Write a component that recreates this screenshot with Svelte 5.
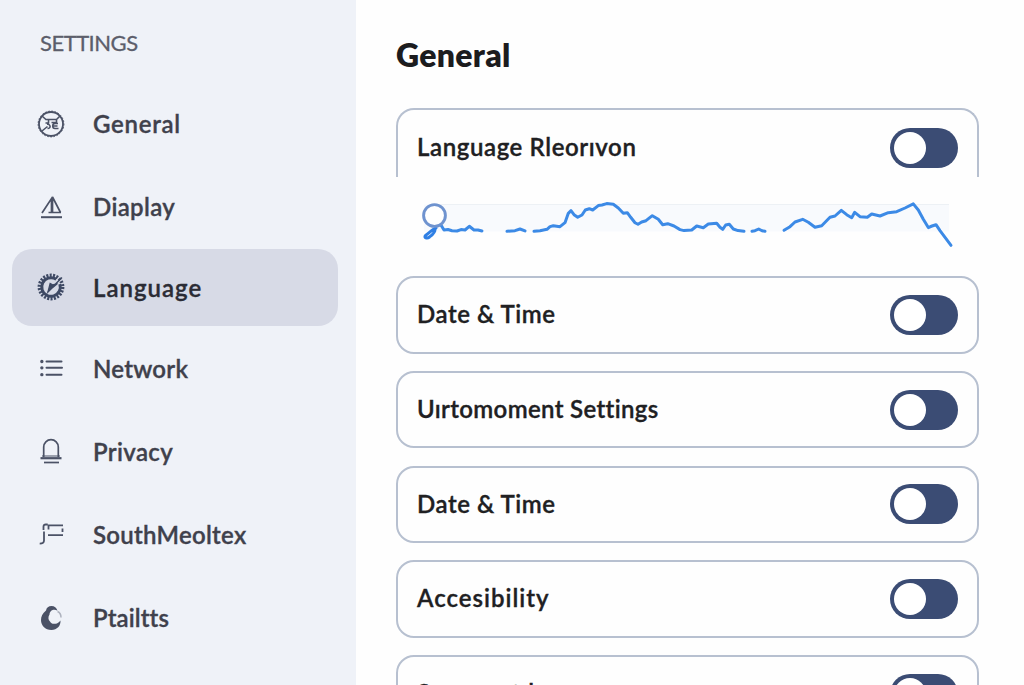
<script>
  const items = [
    { label: 'General', icon: 'badge', spacing: 0.72 },
    { label: 'Diaplay', icon: 'sail', spacing: 0.35 },
    { label: 'Language', icon: 'gear', spacing: 1, active: true },
    { label: 'Network', icon: 'list', spacing: 0.25 },
    { label: 'Privacy', icon: 'bell', spacing: 0.35 },
    { label: 'SouthMeoltex', icon: 'flag', spacing: 0.28 },
    { label: 'Ptailtts', icon: 'moon', spacing: 0.1 }
  ];
  const rows = [
    { label: 'Date & Time', spacing: 0.55 },
    { label: 'Uırtomoment Settings', spacing: 0.35 },
    { label: 'Date & Time', spacing: 0.55 },
    { label: 'Accesibility', spacing: 1 },
    { label: 'Sommentd', spacing: 0.3 }
  ];
  const segments = [
    '440,224 442,226.7 444,230 448,229.5 452,230.7 457,231 461,229.6 465,230 469.3,226.3 474,230 478,230 482,231',
    '507,231.3 515,230.7 520,229 525,230.9',
    '534,231.3 540,230.7 547,229.3 550,226.6 553.3,225.7 560,226.7 565,222.7 568.3,213.3 571,210.7 574,214.7 577.7,217.3 582,215 585.3,210 589.3,208.7 592.7,210 598.3,205.6 602,205 606.7,203.6 613.3,204.3 618.3,208 623.3,213.3 627.3,212.7 630.7,217.3 635,222.7 638,224.3 641.7,222 646,220.7 652.3,215.7 658.3,219.3 662.7,224.7 667.7,223.7 674,226 680,229.6 684,230.6 691.7,230 696.7,226 703.3,227.7 708.3,224 716.7,223.3 720,227.3 722.7,229.3 725.7,225 729.3,224.3 733.3,229 738,230.6 744,231.3',
    '752,231.2 755,230.7 758.7,229 762,230.8 765,231.3',
    '784,230.3 790,226.7 795,222 802.7,219.3 808.3,222.3 815,227.3 821.7,225.7 830,217.3 835,216 841.3,210.3 846.7,214.7 851.7,217.7 854.7,212.3 860,216.7 867.3,217.3 871.7,214 880,216 888.3,212.7 896.7,211.7 905,208 913.3,203.9 918.3,210 923.3,219.3 928.3,227.6 932,226 936,224.7 940,230.7 951,245.4'
  ];
</script>

{#snippet toggle(name)}
  <button class="toggle" role="switch" aria-checked="false" aria-label={name}><span class="knob"></span></button>
{/snippet}

<div class="app">
  <nav class="sidebar">
    <h2>SETTINGS</h2>
    <ul>
      {#each items as item}
        <li class:active={item.active}>
          <svg class="icon" viewBox="0 0 30 30">
            {#if item.icon === 'badge'}
              <circle cx="15" cy="15" r="12" stroke-width="1.8" />
              <circle cx="15" cy="15" r="12.9" stroke-width="1" stroke-dasharray="1.6 1.6" />
              <path d="M6 7 10.500 11M24 7 20 11M6 22 11.500 17.500M9.500 10.500h11.500M12.500 11v3h-3M11 15.300c3.500-.5 4.500 4 .5 4.200M20.500 11v2.500h-5M22 14.500h-3c-3 0-3 5 0 5h3.500M17 17h4.500" stroke-width="1.6" />
            {:else if item.icon === 'sail'}
              <path d="M6 21 15.500 6.500V20.500M16.500 5v16M16.500 5 24.500 20.500M12.500 20.500H25" stroke-width="1.7" />
              <path d="M5 25.200h21" stroke-width="2" />
            {:else if item.icon === 'gear'}
              <circle cx="15" cy="15" r="9.300" stroke-width="3" stroke-dasharray="52 6.430" transform="rotate(-18 15 15)" />
              <circle cx="15" cy="15" r="11.600" stroke-width="3.600" stroke-dasharray="2 1.313" />
              <path d="M11.500 20 26 5.500M12 20l2.200-8.500 2.800 1.500 4.500-1.500-6 5z" class="solid" stroke-width="1.400" />
            {:else if item.icon === 'list'}
              <path d="M10.500 7.500h15M10.500 13.800h15.500M10.500 20.700h15" stroke-width="2" stroke-linecap="round" />
              <path d="M5.800 7.500h.1M5.800 13.800h.1M5.800 20.700h.1" stroke-width="3.300" stroke-linecap="round" />
            {:else if item.icon === 'bell'}
              <path d="M7.700 20V10a7.300 7.300 0 0 1 14.600 0v10" stroke-width="1.700" />
              <path d="M6 19h18" stroke-width="1" />
              <path d="M4.500 21.200h21" stroke-width="2.200" />
              <path d="M8 25.500h15" stroke-width="1.700" />
            {:else if item.icon === 'flag'}
              <path d="M7.500 10V6.500c0-1.300.8-2 2.200-2h2M12.500 9.500V5.400h14.500M8 11.500v9c0 2.300-1 3.100-4.300 3.100M12 15.200h15M26.500 8.500v3.500" stroke-width="1.800" />
            {:else}
              <path class="fill" d="M10 7.500C10.500 4.500 12.500 3 15.500 3c3 0 5 1.700 6 4.700-1.500-.9-3-1.200-5-.7-2 1-3 2.500-3 4.500-1.500 2.500-1.500 5 .5 7 1 2 3 2.700 5 2.200 2 .3 3.800-1 5.500-3.200.3 5.500-3.500 9.400-9 9.400C9 26.900 5 22.500 5 17c0-3.500 1.500-6.500 5-9.500z" />
              <path d="M21.500 8.500c2.500 1 3.500 3 3.500 6" stroke-width="1.500" opacity=".4" />
            {/if}
          </svg>
          <span style="letter-spacing:{item.spacing}px">{item.label}</span>
        </li>
      {/each}
    </ul>
  </nav>

  <main>
    <h1>General</h1>
    <section class="card open">
      <span style="letter-spacing:0.6px">Language Rleorıvon</span>
      {@render toggle('Language')}
    </section>
    <svg class="chart" viewBox="396 177 583 99">
      <rect x="424" y="204.500" width="525" height="27" fill="#f8fafd" />
      <path d="M436 204.500H949" stroke="#edf1f5" stroke-width="1" />
      <g fill="none" stroke="#3c8ae6" stroke-width="3" stroke-linejoin="round" stroke-linecap="round">
        {#each segments as points}
          <polyline {points} />
        {/each}
      </g>
      <path d="M436 228c-3 1-6 4-10.500 7.500-2 2 1.500 3.500 4 1.500s5.500-4 5.500-7.500" fill="none" stroke="#2f7fe4" stroke-width="3" stroke-linecap="round" />
      <circle cx="434.500" cy="215.500" r="10.900" fill="#fff" stroke="#6f93cf" stroke-width="2.900" />
    </svg>
    <div class="rows">
      {#each rows as row}
        <section class="card">
          <span style="letter-spacing:{row.spacing}px">{row.label}</span>
          {@render toggle(row.label)}
        </section>
      {/each}
    </div>
  </main>
</div>

<style>
  :global(body) { margin: 0; overflow: hidden; }
  .app {
    display: flex;
    width: 1024px;
    height: 685px;
    overflow: hidden;
    background: #fefefe;
    font-family: Lato, "Open Sans", sans-serif;
    font-variant-ligatures: none;
  }
  .sidebar {
    box-sizing: border-box;
    flex: 0 0 356px;
    padding: 29px 18px 0 12px;
    background: #eff2f8;
  }
  h2 {
    margin: 0 0 28.500px 28px;
    font-size: 22px;
    line-height: 28px;
    font-weight: 400;
    letter-spacing: -0.500px;
    color: #5c5e6b;
    -webkit-text-stroke: 0.300px currentColor;
  }
  ul {
    display: flex;
    flex-direction: column;
    gap: 6px;
    margin: 0;
    padding: 0;
    list-style: none;
  }
  li {
    box-sizing: border-box;
    display: flex;
    align-items: center;
    gap: 27px;
    height: 77px;
    padding-left: 24px;
    border-radius: 20px;
    font-size: 24px;
    font-weight: 600;
    color: #3f414c;
    white-space: nowrap;
  }
  li span { padding-bottom: 1.500px; -webkit-text-stroke: 0.350px currentColor; }
  li.active {
    margin: -3px 0 -1px;
    background: #d7dae6;
    color: #2b2c35;
  }
  li.active span { padding-bottom: 0; }
  .icon {
    flex: none;
    width: 30px;
    height: 30px;
    fill: none;
    stroke: #4b5266;
    stroke-linecap: butt;
  }
  .icon .solid { fill: #3e4964; }
  .active .icon { stroke: #3e4964; }
  .icon .fill { fill: #4b5266; stroke: none; }
  main {
    flex: none;
    width: 583px;
    padding: 35px 0 0 40px;
  }
  h1 {
    margin: 0;
    height: 73px;
    font-size: 32px;
    line-height: 40px;
    font-weight: 800;
    letter-spacing: 0.300px;
    color: #1c1c1e;
  }
  .card {
    box-sizing: border-box;
    flex: none;
    display: flex;
    align-items: center;
    justify-content: space-between;
    height: 77.500px;
    padding: 0 19px;
    border: 2px solid #b7c0d0;
    border-radius: 18px;
    font-size: 24px;
    font-weight: 600;
    color: #202022;
    white-space: nowrap;
  }
  .card > span { padding-bottom: 2.500px; -webkit-text-stroke: 0.350px currentColor; }
  .card.open {
    height: 69px;
    padding-top: 9px;
    border-bottom: 0;
    border-radius: 18px 18px 0 0;
  }
  .chart { display: block; width: 583px; height: 99px; }
  .rows { display: flex; flex-direction: column; gap: 17.250px; }
  .toggle {
    flex: none;
    display: flex;
    align-items: center;
    width: 68px;
    height: 40px;
    padding: 0 0 0 3.500px;
    border: 0;
    border-radius: 20px;
    background: #3b4c74;
  }
  .knob { width: 32px; height: 32px; border-radius: 50%; background: #fff; }
</style>
